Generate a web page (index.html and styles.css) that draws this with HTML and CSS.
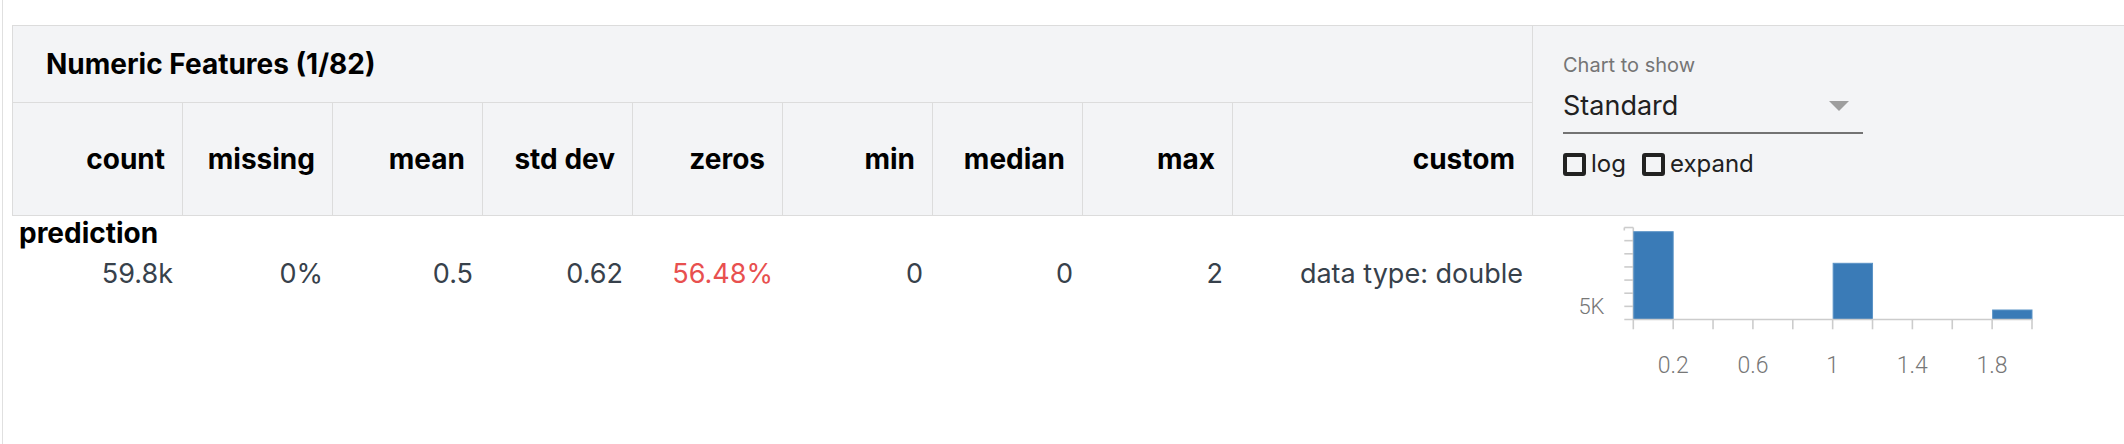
FILE: index.html
```html
<!DOCTYPE html>
<html>
<head>
<meta charset="utf-8">
<link rel="stylesheet" href="styles.css">
</head>
<body>
<div class="page">
  <div class="head">
    <div class="title">Numeric Features (1/82)</div>
    <div class="ctl">
      <div class="ctl-label">Chart to show</div>
      <div class="select">
        <span class="select-value">Standard</span>
        <span class="arrow"></span>
      </div>
      <div class="checks">
        <label class="check"><span class="box"></span>log</label>
        <label class="check"><span class="box"></span>expand</label>
      </div>
    </div>
    <div class="th">count</div>
    <div class="th">missing</div>
    <div class="th">mean</div>
    <div class="th">std dev</div>
    <div class="th">zeros</div>
    <div class="th">min</div>
    <div class="th">median</div>
    <div class="th">max</div>
    <div class="th">custom</div>
  </div>
  <div class="feature">
    <div class="fname">prediction</div>
    <div class="td">59.8k</div>
    <div class="td">0%</div>
    <div class="td">0.5</div>
    <div class="td">0.62</div>
    <div class="td zero">56.48%</div>
    <div class="td">0</div>
    <div class="td">0</div>
    <div class="td">2</div>
    <div class="td">data type: double</div>
    <div class="chart">
      <svg class="hist" width="591" height="170" viewBox="0 0 591 170">
        <g class="axis">
          <line x1="91.3" y1="11.5" x2="91.3" y2="14.5"/>
          <line x1="91.3" y1="11.52" x2="100.3" y2="11.52"/>
          <line x1="91.3" y1="24.66" x2="100.3" y2="24.66"/>
          <line x1="91.3" y1="37.8" x2="100.3" y2="37.8"/>
          <line x1="91.3" y1="50.94" x2="100.3" y2="50.94"/>
          <line x1="91.3" y1="64.08" x2="100.3" y2="64.08"/>
          <line x1="91.3" y1="77.22" x2="100.3" y2="77.22"/>
          <line x1="91.3" y1="90.36" x2="100.3" y2="90.36"/>
          <line x1="100.3" y1="11.52" x2="100.3" y2="103.5"/>
        </g>
        <g class="bars">
          <rect x="100.8" y="15.7" width="39.37" height="87.8"/>
          <rect x="300.15" y="47.3" width="39.37" height="56.2"/>
          <rect x="459.63" y="94" width="39.37" height="9.5"/>
        </g>
        <g class="axis">
          <line x1="91.3" y1="103.5" x2="499.5" y2="103.5"/>
          <line x1="100.3" y1="103.5" x2="100.3" y2="113.3"/>
          <line x1="140.17" y1="103.5" x2="140.17" y2="113.3"/>
          <line x1="180.04" y1="103.5" x2="180.04" y2="113.3"/>
          <line x1="219.91" y1="103.5" x2="219.91" y2="113.3"/>
          <line x1="259.78" y1="103.5" x2="259.78" y2="113.3"/>
          <line x1="299.65" y1="103.5" x2="299.65" y2="113.3"/>
          <line x1="339.52" y1="103.5" x2="339.52" y2="113.3"/>
          <line x1="379.39" y1="103.5" x2="379.39" y2="113.3"/>
          <line x1="419.26" y1="103.5" x2="419.26" y2="113.3"/>
          <line x1="459.13" y1="103.5" x2="459.13" y2="113.3"/>
          <line x1="499" y1="103.5" x2="499" y2="113.3"/>
        </g>
        <g class="labels">
          <text class="ylab" x="71.5" y="98.3">5K</text>
          <text x="140.17" y="157.3">0.2</text>
          <text x="219.91" y="157.3">0.6</text>
          <text x="299.65" y="157.3">1</text>
          <text x="379.39" y="157.3">1.4</text>
          <text x="459.13" y="157.3">1.8</text>
        </g>
      </svg>
    </div>
  </div>
</div>
</body>
</html>
```

FILE: styles.css
```css
html, body {
  margin: 0;
  padding: 0;
  background: #ffffff;
  overflow: hidden;
}

body {
  width: 2124px;
  height: 444px;
  font-family: Inter, "Noto Sans", sans-serif;
  color: #000;
}

.page {
  box-sizing: border-box;
  height: 444px;
  margin-left: 2px;
  border-left: 1px solid #e0e0e0;
  padding: 25px 0 0 9px;
}

.head {
  display: grid;
  grid-template-columns: 170px repeat(7, 150px) 300px 600px;
  grid-template-rows: 77px 113px;
  width: max-content;
  background: #f3f4f6;
  border-top: 1px solid #dcdcdc;
  border-left: 1px solid #dcdcdc;
}

.head > div {
  box-sizing: border-box;
  border-right: 1px solid #dcdcdc;
  border-bottom: 1px solid #dcdcdc;
}

.title {
  grid-column: 1 / 10;
  grid-row: 1;
  display: flex;
  align-items: center;
  padding-left: 33px;
  font-weight: 700;
  font-size: 28px;
  line-height: 34px;
}

.th {
  grid-row: 2;
  display: flex;
  align-items: center;
  justify-content: flex-end;
  padding-right: 17px;
  font-weight: 700;
  font-size: 28px;
  line-height: 34px;
}

.ctl {
  grid-column: 10;
  grid-row: 1 / 3;
  padding: 27px 0 0 30px;
}

.ctl-label {
  font-size: 20px;
  line-height: 24px;
  color: #757575;
}

.select {
  box-sizing: border-box;
  width: 300px;
  margin-top: 12px;
  padding-bottom: 9px;
  display: flex;
  align-items: center;
  justify-content: space-between;
  border-bottom: 2px solid #737373;
}

.select-value {
  font-size: 27px;
  line-height: 34px;
  color: #212121;
}

.arrow {
  width: 0;
  height: 0;
  margin-right: 14px;
  border-left: 10px solid transparent;
  border-right: 10px solid transparent;
  border-top: 10px solid #9e9e9e;
}

.checks {
  display: flex;
  align-items: center;
  margin-top: 18px;
  font-size: 24px;
  line-height: 24px;
  color: #212121;
}

.check {
  display: flex;
  align-items: center;
}

.check + .check {
  margin-left: 16px;
}

.box {
  box-sizing: border-box;
  width: 23px;
  height: 23px;
  margin-right: 5px;
  border: 4px solid #222;
  border-radius: 3px;
}

.feature {
  display: grid;
  grid-template-columns: 170px repeat(7, 150px) 300px 591px;
  grid-template-rows: 34px auto;
  margin-left: 1px;
}

.fname {
  grid-column: 1 / 10;
  grid-row: 1;
  padding-left: 6px;
  font-weight: 700;
  font-size: 28px;
  line-height: 34px;
}

.td {
  grid-row: 2;
  align-self: start;
  padding: 7px 10px 0 0;
  text-align: right;
  font-size: 27px;
  line-height: 34px;
  color: #37414b;
}

.td.zero {
  color: #e8504f;
}

.chart {
  grid-column: 10;
  grid-row: 1 / 3;
}

.hist {
  display: block;
}

.axis line {
  stroke: #cccccc;
  stroke-width: 1.6;
}

.bars rect {
  fill: #3a7bb7;
  stroke: #5a93c6;
  stroke-width: 1;
}

.labels text {
  font-family: Roboto, "Liberation Sans", sans-serif;
  font-weight: 300;
  font-size: 23px;
  fill: #777777;
  text-anchor: middle;
}

.labels .ylab {
  font-size: 22px;
  text-anchor: end;
}
```
